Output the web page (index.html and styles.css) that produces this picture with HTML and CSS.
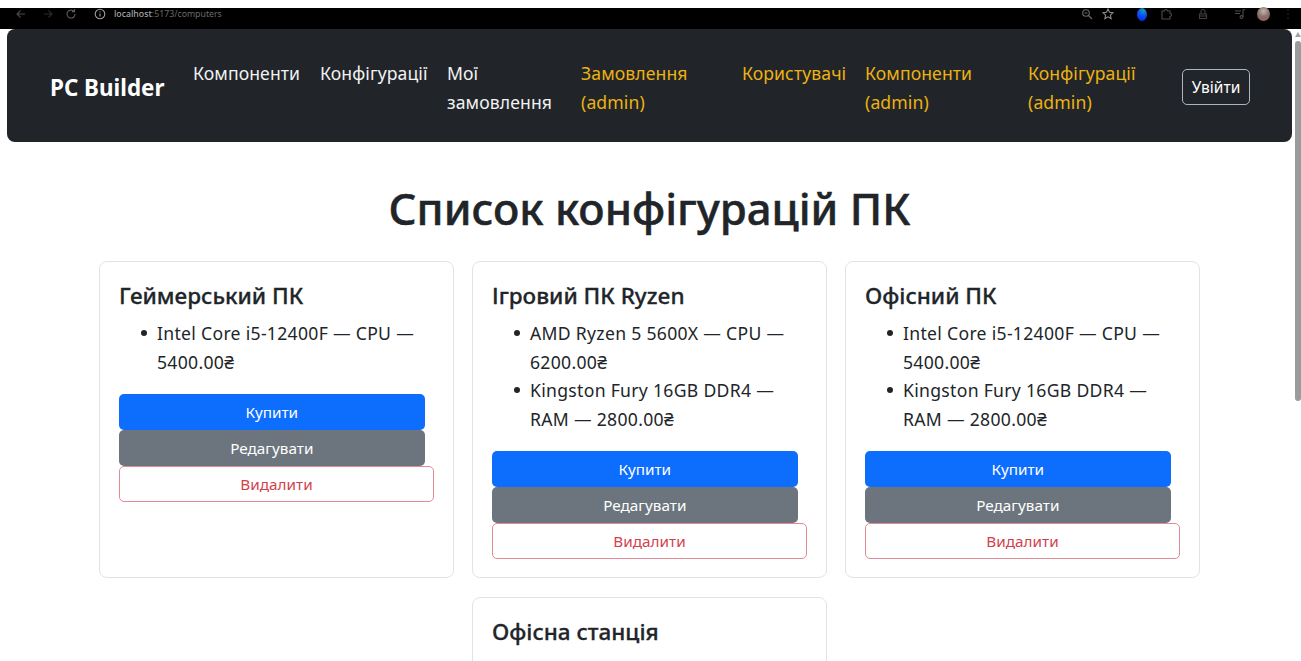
FILE: index.html
```html
<!DOCTYPE html>
<html lang="uk">
<head>
<meta charset="utf-8">
<title>PC Builder</title>
<link rel="stylesheet" href="styles.css">
</head>
<body>
<header class="chrome">
  <div class="chrome-left">
    <svg class="ico back" viewBox="0 0 12 12"><path d="M10 6H2M5.500 2.500 2 6l3.500 3.500"/></svg>
    <svg class="ico fwd" viewBox="0 0 12 12"><path d="M2 6h8M6.500 2.500 10 6 6.500 9.500"/></svg>
    <svg class="ico reload" viewBox="0 0 12 12"><path d="M10 6a4 4 0 1 1-1.200-2.800M9.500 1v2.600H7"/></svg>
    <svg class="ico info" viewBox="0 0 12 12"><circle cx="6" cy="6" r="4.800"/><path d="M6 5.500v3M6 3.300v1"/></svg>
    <span class="url"><b>localhost</b>:5173/computers</span>
  </div>
  <div class="chrome-right">
    <svg class="ico zoom" viewBox="0 0 12 12"><circle cx="5" cy="5" r="3.300"/><path d="M7.500 7.500 11 11M3.500 5h3"/></svg>
    <svg class="ico star" viewBox="0 0 12 12"><path d="m6 1 1.500 3.300 3.500.4-2.600 2.400.7 3.500L6 8.800l-3.100 1.800.7-3.500L1 4.700l3.500-.4z"/></svg>
    <span class="ball"></span>
    <svg class="ico puzzle" viewBox="0 0 12 12"><path d="M2 3h2.500a1.500 1.500 0 0 1 3 0H10v2.500a1.500 1.500 0 0 1 0 3V11H2z"/></svg>
    <svg class="ico lock" viewBox="0 0 12 12"><path d="M2.500 6h7v4.500h-7zM4 6V3.500a2 2 0 0 1 4 0V6M2.500 8h7"/></svg>
    <svg class="ico music" viewBox="0 0 12 12"><path d="M1 3h6M1 5.500h5M9 9V2l2-.5"/><circle cx="7.500" cy="9" r="1.400"/></svg>
    <span class="avatar"></span>
    <svg class="ico dots" viewBox="0 0 12 12"><path d="M6 1.500v1M6 5.500v1M6 9.500v1"/></svg>
  </div>
</header>

<div class="viewport">
  <div class="page">
    <nav class="navbar">
      <a class="brand" href="#">PC Builder</a>
      <ul class="nav-list">
        <li><a href="#">Компоненти</a></li>
        <li><a href="#">Конфігурації</a></li>
        <li><a href="#">Мої замовлення</a></li>
        <li><a class="admin" href="#">Замовлення (admin)</a></li>
        <li><a class="admin" href="#">Користувачі</a></li>
        <li><a class="admin" href="#">Компоненти (admin)</a></li>
        <li><a class="admin" href="#">Конфігурації (admin)</a></li>
      </ul>
      <button class="login">Увійти</button>
    </nav>

    <main class="content">
      <h1 class="title">Список конфігурацій ПК</h1>
      <section class="cards">
        <article class="card">
          <h2 class="card-title">Геймерський ПК</h2>
          <ul class="parts">
            <li>Intel Core i5-12400F — CPU — 5400.00₴</li>
          </ul>
          <button class="btn btn-buy">Купити</button>
          <button class="btn btn-edit">Редагувати</button>
          <button class="btn btn-delete">Видалити</button>
        </article>
        <article class="card">
          <h2 class="card-title">Ігровий ПК Ryzen</h2>
          <ul class="parts">
            <li>AMD Ryzen 5 5600X — CPU — 6200.00₴</li>
            <li>Kingston Fury 16GB DDR4 — RAM — 2800.00₴</li>
          </ul>
          <button class="btn btn-buy">Купити</button>
          <button class="btn btn-edit">Редагувати</button>
          <button class="btn btn-delete">Видалити</button>
        </article>
        <article class="card">
          <h2 class="card-title">Офісний ПК</h2>
          <ul class="parts">
            <li>Intel Core i5-12400F — CPU — 5400.00₴</li>
            <li>Kingston Fury 16GB DDR4 — RAM — 2800.00₴</li>
          </ul>
          <button class="btn btn-buy">Купити</button>
          <button class="btn btn-edit">Редагувати</button>
          <button class="btn btn-delete">Видалити</button>
        </article>
        <article class="card card-second-col">
          <h2 class="card-title">Офісна станція</h2>
        </article>
      </section>
    </main>
  </div>

  <div class="scrollbar">
    <span class="scroll-arrow"></span>
    <span class="scroll-thumb"></span>
  </div>
</div>
</body>
</html>
```
FILE: styles.css
```css
* { box-sizing: border-box; }

html, body {
  height: 100%;
  margin: 0;
  overflow: hidden;
  background: #fff;
}

body {
  display: flex;
  flex-direction: column;
  padding-top: 8px;
  font-family: "Noto Sans", "Open Sans", sans-serif;
  color: #212529;
}

/* Browser toolbar */
.chrome {
  flex: none;
  height: 21px;
  padding-bottom: 9px;
  background: #000;
  display: flex;
  justify-content: space-between;
  align-items: center;
}
.chrome-left, .chrome-right { display: flex; align-items: center; }
.chrome-left { padding-left: 15px; }
.chrome-right { padding-right: 7px; }

.ico {
  width: 12px;
  height: 12px;
  fill: none;
  stroke: #6f6f6f;
  stroke-width: 1.100;
  flex: none;
}
.back { stroke: #4a4a4a; }
.fwd { stroke: #2c2c2c; margin-left: 15px; }
.reload { margin-left: 11px; stroke: #5d5d5d; }
.info { margin-left: 17px; stroke: #a0a0a0; }
.url {
  margin-left: 8px;
  font-size: 8.750px;
  line-height: 12px;
  color: #6a6a6a;
}
.url b { font-weight: 500; color: #a8a8a8; }

.zoom { stroke: #6a6a6a; }
.star { margin-left: 9px; stroke: #8a8a8a; }
.ball {
  width: 10px;
  height: 13px;
  margin-left: 23px;
  border-radius: 50%;
  background: radial-gradient(circle at 62% 22%, #18a0a0 0, #0a4cff 45%, #0522c8 100%);
}
.puzzle { margin-left: 13px; stroke: #4c4c4c; }
.lock { margin-left: 25px; stroke: #3f3f3f; }
.music { margin-left: 25px; stroke: #4c4c4c; }
.avatar {
  width: 13px;
  height: 14px;
  margin-left: 11px;
  border-radius: 50%;
  background: radial-gradient(circle at 50% 30%, #c4b5aa 0, #84706a 50%, #b0564e 100%);
}
.dots { margin-left: 12px; stroke: #4a4a4a; }

/* Page area and its scrollbar */
.viewport {
  flex: 1;
  min-height: 0;
  display: grid;
  grid-template-columns: 1fr 7px;
}
.page { min-width: 0; overflow: hidden; }

.scrollbar {
  display: flex;
  flex-direction: column;
  align-items: center;
}
.scroll-arrow {
  margin-top: 3px;
  border: 3.500px solid transparent;
  border-top: 0;
  border-bottom: 5px solid #a3a3a3;
}
.scroll-thumb {
  width: 6px;
  height: 360px;
  margin-top: 4px;
  border-radius: 3px;
  background: #9b9b9b;
}

/* Navigation bar */
.navbar {
  height: 113px;
  margin: 0 2px 0 7px;
  padding: 30px 42px 0 43px;
  background: #212529;
  border-radius: 8px;
  display: flex;
  align-items: flex-start;
}
.brand {
  width: 143px;
  flex: none;
  margin-top: 13px;
  font-size: 22.400px;
  line-height: 32px;
  font-weight: 700;
  color: #fff;
  text-decoration: none;
}
.nav-list {
  flex: 1;
  margin: 0;
  padding: 0;
  list-style: none;
  display: grid;
  grid-template-columns: 127px 127px 134px 161px 123px 163px 1fr;
  font-size: 17.600px;
  letter-spacing: .1px;
  line-height: 29px;
}
.nav-list a { color: #f1f2f3; text-decoration: none; display: block; padding-right: 16px; }
.nav-list a.admin { color: #ecb212; }
.login {
  flex: none;
  width: 68px;
  height: 36px;
  margin-top: 10px;
  padding: 0;
  background: transparent;
  border: 1px solid #adb5bd;
  border-radius: 5px;
  color: #fff;
  font: inherit;
  font-size: 15.500px;
}

/* Configurations list */
.content {
  width: 1101px;
  margin-left: 99px;
  padding-top: 39px;
}
.title {
  margin: 0 0 26px;
  text-align: center;
  font-size: 43.700px;
  line-height: 54px;
  font-weight: 500;
  -webkit-text-stroke: .5px #212529;
}
.cards {
  display: grid;
  grid-template-columns: repeat(3, 355px);
  justify-content: space-between;
  row-gap: 19px;
}
.card {
  padding: 19px 19px 18px;
  background: #fff;
  border: 1px solid #e2e3e5;
  border-radius: 8px;
}
.card-second-col { grid-column: 2; }
.card-title {
  margin: 0 0 9px;
  font-size: 22.500px;
  line-height: 29px;
  font-weight: 500;
  -webkit-text-stroke: .3px #212529;
}
.parts {
  margin: 0 0 18px;
  padding-left: 38px;
  list-style: none;
  font-size: 17.600px;
  letter-spacing: .3px;
  line-height: 28.500px;
}
.parts li { position: relative; }
.parts li::before {
  content: "";
  position: absolute;
  left: -16px;
  top: 11px;
  width: 6px;
  height: 6px;
  border-radius: 50%;
  background: #212529;
}

.btn {
  display: block;
  height: 36px;
  padding: 0;
  border: 1px solid transparent;
  border-radius: 5px;
  font: inherit;
  font-size: 15.300px;
}
.btn-buy { width: 97%; background: #0d6efd; color: #fff; }
.btn-edit { width: 97%; background: #6c757d; color: #fff; }
.btn-delete { width: 100%; background: #fff; color: #d23f4e; border-color: #e28a95; }
```
